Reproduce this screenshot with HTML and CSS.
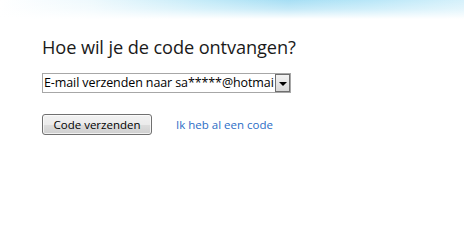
FILE: index.html
```html
<!DOCTYPE html>
<html lang="nl">
<head>
<meta charset="utf-8">
<title>Code ontvangen</title>
<link rel="stylesheet" href="styles.css">
</head>
<body>
<div class="sky"></div>
<main class="content">
  <h1 class="title">Hoe wil je de code ontvangen?</h1>
  <div class="select">
    <span class="select-text">E-mail verzenden naar sa*****@hotmai</span>
    <span class="select-btn"><span class="arrow"></span></span>
  </div>
  <div class="actions">
    <button class="btn" type="button">Code verzenden</button>
    <a class="link" href="#">Ik heb al een code</a>
  </div>
</main>
</body>
</html>
```
FILE: styles.css
```css
html, body {
  margin: 0;
  padding: 0;
  background: #ffffff;
}
body {
  width: 464px;
  height: 251px;
  overflow: hidden;
  font-family: "Open Sans", "Noto Sans", sans-serif;
  color: #000;
}
.sky {
  height: 20px;
  background:
    linear-gradient(to bottom, rgba(255,255,255,0) 0%, rgba(255,255,255,0.35) 45%, #ffffff 95%),
    linear-gradient(to right, #ffffff 0%, #eef9fd 20%, #c2eaf8 45%, #a6def4 62%, #b9e7f8 80%, #d6f1fb 100%);
}
.content {
  padding: 16px 0 0 42px;
}
.title {
  margin: 0;
  font-weight: 400;
  font-size: 18.2px;
  line-height: 22px;
  color: #1a1a1a;
  letter-spacing: -0.1px;
}
.select {
  margin-top: 15px;
  width: 249px;
  height: 20px;
  box-sizing: border-box;
  border: 1px solid #a7a7a7;
  display: flex;
  align-items: stretch;
  background: #fff;
}
.select-text {
  flex: 1;
  overflow: hidden;
  white-space: nowrap;
  font-size: 12.5px;
  line-height: 18px;
  padding-left: 1px;
  letter-spacing: -0.1px;
}
.select-btn {
  width: 15px;
  box-sizing: border-box;
  border: 1px solid #6f6f6f;
  background: linear-gradient(to bottom, #f3f3f3, #d9d9d9);
  display: flex;
  align-items: center;
  justify-content: center;
}
.arrow {
  width: 0;
  height: 0;
  border-left: 4px solid transparent;
  border-right: 4px solid transparent;
  border-top: 4px solid #000;
  margin-top: 1px;
}
.actions {
  margin-top: 21px;
  display: flex;
  align-items: center;
  gap: 24px;
}
.btn {
  width: 110px;
  height: 21px;
  box-sizing: border-box;
  border: 1px solid #707070;
  border-radius: 3px;
  background: linear-gradient(to bottom, #f2f2f2 0%, #ebebeb 50%, #dddddd 51%, #cfcfcf 100%);
  font-family: "Open Sans", "Noto Sans", sans-serif;
  font-size: 11.5px;
  color: #000;
  padding: 0;
  line-height: 19px;
  box-shadow: inset 0 0 0 1px rgba(255,255,255,0.7);
}
.link {
  font-size: 11.5px;
  color: #2b6dc6;
  text-decoration: none;
}
```
